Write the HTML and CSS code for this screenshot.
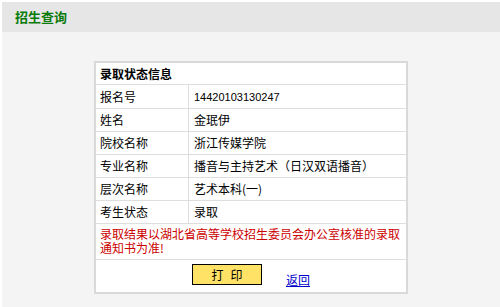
FILE: index.html
```html
<!DOCTYPE html>
<html lang="zh-CN">
<head>
    <meta charset="UTF-8">
    <meta name="viewport" content="width=device-width, initial-scale=1.0">
    <title>招生查询</title>
    <link rel="stylesheet" href="styles.css">
</head>
<body>
    <div class="page">
        <div class="top-bar">
            <h1>招生查询</h1>
        </div>

        <div class="main">
            <table class="result">
                <colgroup>
                    <col class="col-label">
                    <col>
                </colgroup>
                <tr>
                    <td class="caption" colspan="2">录取状态信息</td>
                </tr>
                <tr>
                    <td class="label">报名号</td>
                    <td class="value"><span class="num">14420103130247</span></td>
                </tr>
                <tr>
                    <td class="label">姓名</td>
                    <td class="value">金珉伊</td>
                </tr>
                <tr>
                    <td class="label">院校名称</td>
                    <td class="value">浙江传媒学院</td>
                </tr>
                <tr>
                    <td class="label">专业名称</td>
                    <td class="value">播音与主持艺术（日汉双语播音）</td>
                </tr>
                <tr>
                    <td class="label">层次名称</td>
                    <td class="value">艺术本科(一)</td>
                </tr>
                <tr>
                    <td class="label">考生状态</td>
                    <td class="value">录取</td>
                </tr>
                <tr>
                    <td class="notice" colspan="2">录取结果以湖北省高等学校招生委员会办公室核准的录取通知书为准!</td>
                </tr>
                <tr>
                    <td class="actions" colspan="2">
                        <div class="action-row">
                            <button type="button" class="print-btn" onclick="window.print()">打印</button>
                            <a href="#" class="back-link">返回</a>
                        </div>
                    </td>
                </tr>
            </table>
        </div>
    </div>
</body>
</html>
```

FILE: styles.css
```css
body {
    margin: 0;
    background: #ffffff;
    font-family: "Noto Sans CJK SC", "Noto Sans", sans-serif;
    font-size: 12px;
    color: #000;
}
.page {
    padding: 2px 0 0 2px;
}
.top-bar {
    height: 30px;
    background: #e6e6e6;
    display: flex;
    align-items: center;
    padding-left: 13px;
}
.top-bar h1 {
    margin: 0;
    font-size: 13px;
    font-weight: bold;
    color: #0a7a0a;
    line-height: 14px;
}
.main {
    background: #f4f4f4;
    height: 275px;
    padding-top: 29px;
    box-sizing: border-box;
}
.result {
    width: 314px;
    margin: 0 auto;
    table-layout: fixed;
    border-collapse: separate;
    border-spacing: 0;
    border: 2px solid #d9d9d9;
    background: #fff;
}
.col-label {
    width: 93px;
}
.result td {
    border-bottom: 1px solid #dedede;
    padding: 0;
    line-height: 22px;
    vertical-align: middle;
    white-space: nowrap;
}
.result tr:last-child td {
    border-bottom: none;
}
.caption {
    font-weight: bold;
    height: 21px;
    line-height: 21px !important;
    padding-left: 4px !important;
}
.label {
    padding-left: 4px !important;
    border-right: 1px solid #dedede;
}
.value {
    padding-left: 5px !important;
}
.num {
    font-family: "Liberation Sans", Arial, sans-serif;
    font-size: 11px;
}
.notice {
    color: #cc0000;
    white-space: normal !important;
    line-height: 14px !important;
    padding: 3px 6px 4px 4px !important;
}
.actions {
    height: 32px;
}
.action-row {
    display: flex;
    justify-content: center;
    align-items: flex-end;
    gap: 24px;
    padding: 4px 0 7px 0;
}
.print-btn {
    width: 70px;
    height: 21px;
    padding: 0 0 0 7px;
    margin: 0;
    background: #ffe266;
    border: 1px solid #000;
    font-family: "Noto Sans CJK SC", sans-serif;
    font-size: 12px;
    letter-spacing: 7px;
    line-height: 18px;
    color: #000;
    cursor: pointer;
}
.back-link {
    color: #0000cc;
    text-decoration: underline;
    line-height: 14px;
    margin-bottom: -2px;
}
```
